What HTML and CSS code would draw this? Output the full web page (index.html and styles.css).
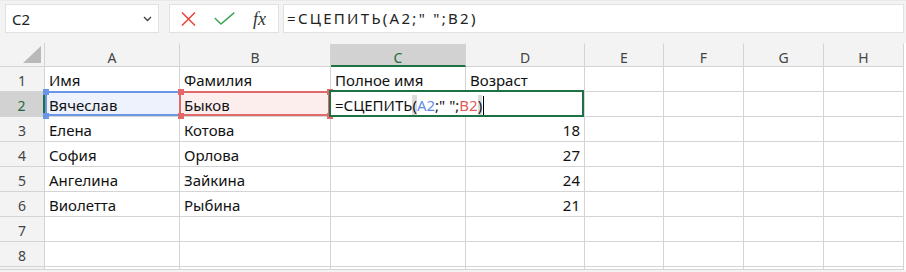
FILE: index.html
```html
<!DOCTYPE html>
<html lang="ru">
<head>
    <meta charset="UTF-8">
    <title>СЦЕПИТЬ</title>
    <link rel="stylesheet" href="styles.css">
</head>
<body>
    <div class="toolbar">
        <div class="namebox">
            <span>C2</span>
            <svg class="chevron" width="9" height="6" viewBox="0 0 9 6"><path d="M1 1 L4.5 4.5 L8 1" fill="none" stroke="#444" stroke-width="1.4"/></svg>
        </div>
        <div class="fbuttons">
            <svg width="15" height="14" viewBox="0 0 15 14"><path d="M1 0.5 L14 13.5 M14 0.5 L1 13.5" stroke="#e8453c" stroke-width="1.5" fill="none"/></svg>
            <svg width="21" height="13" viewBox="0 0 21 13"><path d="M0.8 6 L7 12 L20.3 0.6" stroke="#3aa655" stroke-width="1.5" fill="none"/></svg>
            <span class="fx">fx</span>
        </div>
        <div class="formula">=СЦЕПИТЬ(A2;" ";B2)</div>
    </div>

    <div class="sheet">
        <div class="corner"><span class="tri"></span></div>
        <div class="colhead">A</div>
        <div class="colhead">B</div>
        <div class="colhead active">C</div>
        <div class="colhead">D</div>
        <div class="colhead">E</div>
        <div class="colhead">F</div>
        <div class="colhead">G</div>
        <div class="colhead">H</div>

        <div class="rowhead">1</div>
        <div class="cell">Имя</div>
        <div class="cell">Фамилия</div>
        <div class="cell">Полное имя</div>
        <div class="cell">Возраст</div>
        <div class="cell"></div><div class="cell"></div><div class="cell"></div><div class="cell"></div>

        <div class="rowhead active">2</div>
        <div class="cell ref-blue">Вячеслав
            <span class="dot blue tl"></span><span class="dot blue bl"></span>
        </div>
        <div class="cell ref-red">Быков
            <span class="dot red tl"></span><span class="dot red bl"></span>
            <span class="dot red tr"></span><span class="dot red br"></span>
        </div>
        <div class="cell editing">=СЦЕПИТЬ<span class="paren">(</span><span class="c-blue">A2</span>;" ";<span class="c-red">B2</span><span class="paren">)</span><span class="caret"></span></div>
        <div class="cell"></div><div class="cell"></div><div class="cell"></div><div class="cell"></div>

        <div class="rowhead">3</div>
        <div class="cell">Елена</div>
        <div class="cell">Котова</div>
        <div class="cell"></div>
        <div class="cell num">18</div>
        <div class="cell"></div><div class="cell"></div><div class="cell"></div><div class="cell"></div>

        <div class="rowhead">4</div>
        <div class="cell">София</div>
        <div class="cell">Орлова</div>
        <div class="cell"></div>
        <div class="cell num">27</div>
        <div class="cell"></div><div class="cell"></div><div class="cell"></div><div class="cell"></div>

        <div class="rowhead">5</div>
        <div class="cell">Ангелина</div>
        <div class="cell">Зайкина</div>
        <div class="cell"></div>
        <div class="cell num">24</div>
        <div class="cell"></div><div class="cell"></div><div class="cell"></div><div class="cell"></div>

        <div class="rowhead">6</div>
        <div class="cell">Виолетта</div>
        <div class="cell">Рыбина</div>
        <div class="cell"></div>
        <div class="cell num">21</div>
        <div class="cell"></div><div class="cell"></div><div class="cell"></div><div class="cell"></div>

        <div class="rowhead">7</div>
        <div class="cell"></div><div class="cell"></div><div class="cell"></div><div class="cell"></div>
        <div class="cell"></div><div class="cell"></div><div class="cell"></div><div class="cell"></div>

        <div class="rowhead">8</div>
        <div class="cell"></div><div class="cell"></div><div class="cell"></div><div class="cell"></div>
        <div class="cell"></div><div class="cell"></div><div class="cell"></div><div class="cell"></div>

        <div class="rowhead"></div>
        <div class="cell"></div><div class="cell"></div><div class="cell"></div><div class="cell"></div>
        <div class="cell"></div><div class="cell"></div><div class="cell"></div><div class="cell"></div>
    </div>
</body>
</html>
```

FILE: styles.css
```css
/* Excel-like sheet with formula bar */
body {
    margin: 0;
    background-color: #f3f3f3;
    font-family: 'Noto Sans', sans-serif;
    overflow: hidden;
}

.toolbar {
    display: flex;
    height: 43px;
    box-sizing: border-box;
    padding: 4px 2px 0 5px;
    border-top: 1px solid #e9e9e9;
}

.namebox,
.fbuttons,
.formula {
    height: 29px;
    box-sizing: border-box;
    background: #fff;
    border: 1px solid #e1e1e1;
    margin-top: -1px;
}

.namebox {
    width: 154px;
    display: flex;
    align-items: center;
    justify-content: space-between;
    padding: 0 6px 0 6px;
    font-size: 15px;
    color: #222;
}

.chevron {
    margin-top: 1px;
}

.fbuttons {
    width: 110px;
    margin-left: 10px;
    display: flex;
    align-items: center;
    padding-left: 11px;
    gap: 18px;
}

.fx {
    font-family: 'Liberation Serif', serif;
    font-style: italic;
    font-size: 18px;
    color: #333;
    line-height: 1;
}

.formula {
    flex: 1;
    margin-left: 4px;
    padding-left: 3px;
    font-size: 15px;
    letter-spacing: 2.3px;
    line-height: 27px;
    color: #222;
}

.sheet {
    display: grid;
    grid-template-columns: 45px 135px 151px 135px 119px 79px 80px 80px 80px;
    grid-template-rows: 24px repeat(8, 25px);
    background: #fff;
}

.corner,
.colhead,
.rowhead {
    background: #f3f3f3;
    color: #444;
    font-size: 14px;
    box-sizing: border-box;
    border-right: 1px solid #d4d4d4;
    border-bottom: 1px solid #d4d4d4;
    display: flex;
    justify-content: center;
}

.corner {
    position: relative;
}

.tri {
    position: absolute;
    right: 3px;
    bottom: 3px;
    width: 0;
    height: 0;
    border-left: 18px solid transparent;
    border-bottom: 17px solid #b9b9b9;
}

.colhead {
    align-items: center;
    padding-top: 4px;
    border-top: 1px solid #f3f3f3;
}

.colhead.active {
    background: #d2d2d2;
    color: #1e6b41;
    border-bottom: 2px solid #1e7145;
    padding-top: 5px;
}

.rowhead {
    align-items: center;
    padding-top: 2px;
}

.rowhead.active {
    background: #d2d2d2;
    color: #1e6b41;
    border-right: 2px solid #1e7145;
}

.cell {
    position: relative;
    box-sizing: border-box;
    border-right: 1px solid #d4d4d4;
    border-bottom: 1px solid #d4d4d4;
    font-size: 15px;
    color: #111;
    padding: 2px 4px 0 4px;
    line-height: 22px;
    white-space: nowrap;
}

.cell.num {
    text-align: right;
}

.ref-blue {
    background: #edf2fc;
}

.ref-blue::after,
.ref-red::after,
.editing::after {
    content: "";
    position: absolute;
    pointer-events: none;
}

.ref-blue::after {
    left: 0;
    top: -1px;
    right: 0;
    bottom: 0;
    border: 2px solid #6b96e6;
    border-right: none;
}

.ref-red {
    background: #fdeeee;
}

.ref-red::after {
    left: -1px;
    top: -1px;
    right: 0;
    bottom: 0;
    border: 2px solid #e36a6a;
}

.dot {
    position: absolute;
    width: 6px;
    height: 6px;
    z-index: 2;
}

.dot.blue { background: #6b96e6; }
.dot.red { background: #e36a6a; }
.dot.tl { left: -2px; top: -3px; }
.dot.bl { left: -2px; bottom: -3px; }
.dot.tr { right: -3px; top: -3px; }
.dot.br { right: -3px; bottom: -3px; }

.editing {
    grid-column: span 2;
    background: #fff;
    z-index: 3;
}

.editing::after {
    left: -2px;
    top: -2px;
    right: 0;
    bottom: -1px;
    border: 2px solid #1e7145;
}

.paren {
    background: #dcdcdc;
}

.c-blue { color: #5f8fe6; }
.c-red { color: #e05c5c; }

.caret {
    display: inline-block;
    width: 1px;
    height: 19px;
    background: #000;
    vertical-align: -4px;
    margin-left: 1px;
}
```
